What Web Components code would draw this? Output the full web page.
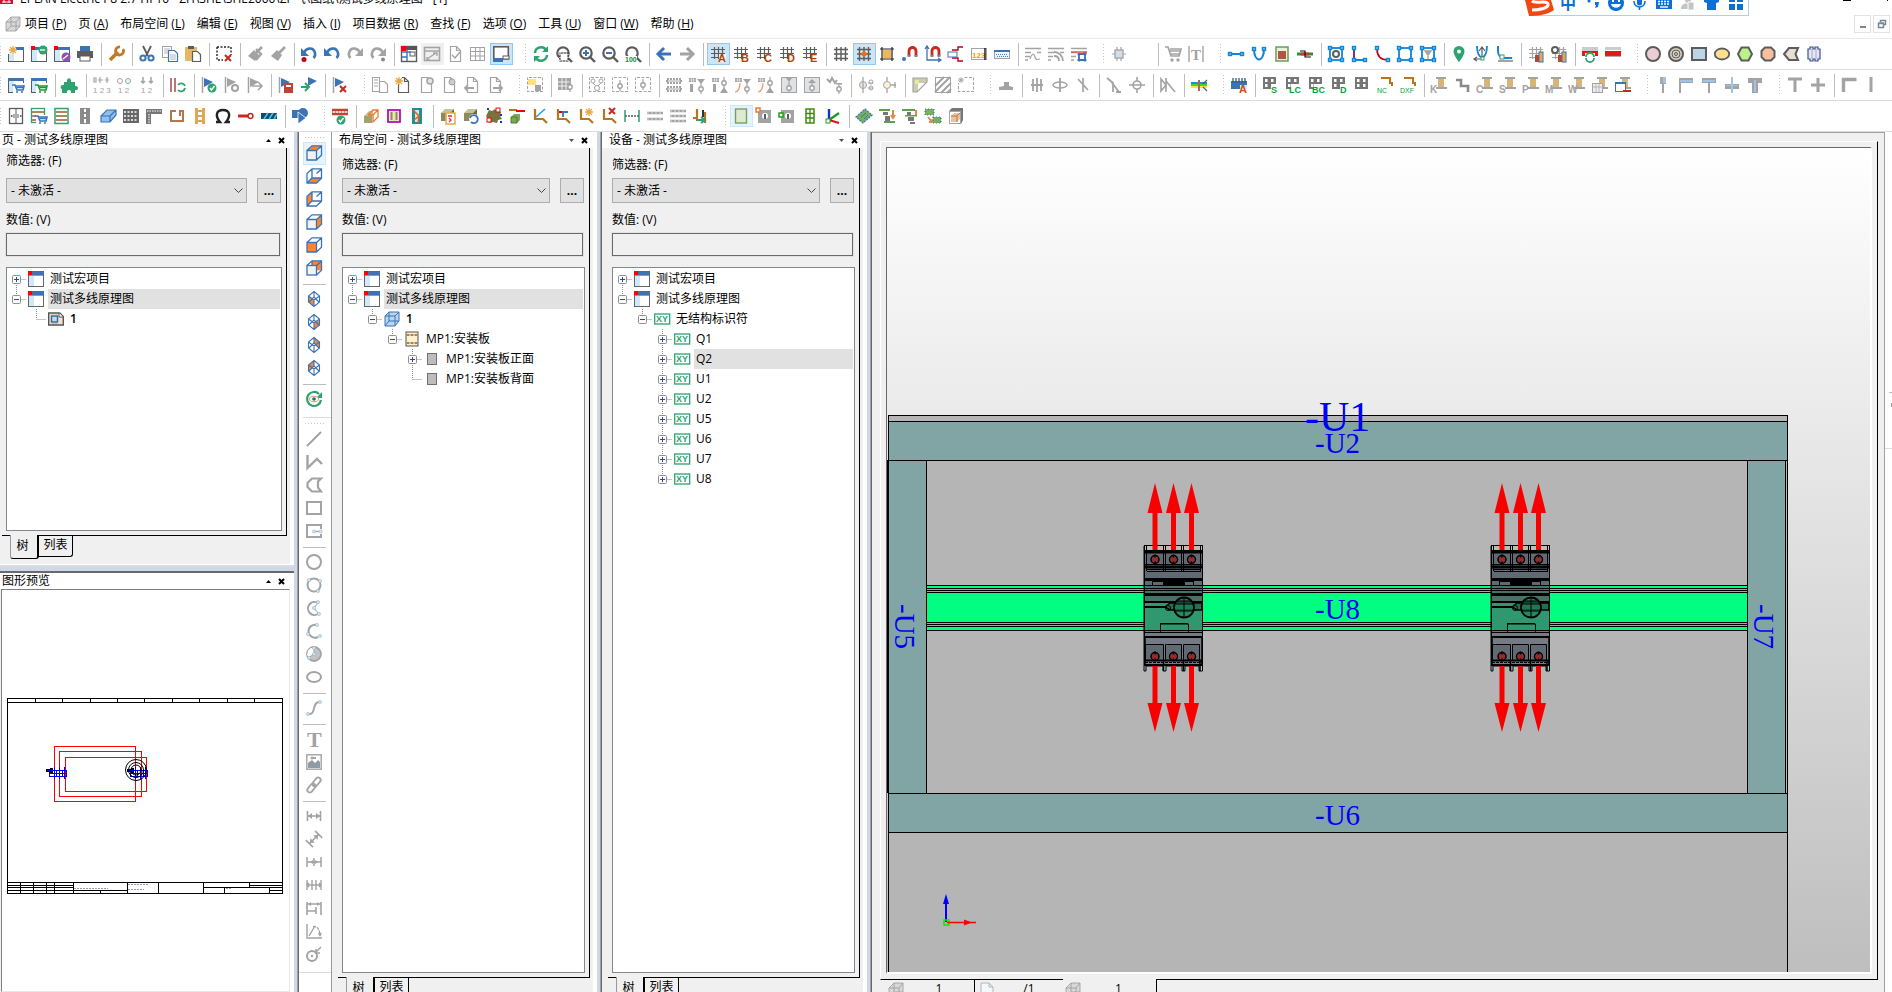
<!DOCTYPE html>
<html lang="zh-CN">
<head>
<meta charset="utf-8">
<title>EPLAN Electric P8</title>
<style>
html,body{margin:0;height:100%;overflow:hidden;background:#fff}
body{font:12px/16px "Open Sans","Noto Sans CJK SC",sans-serif;color:#000}
</style>
</head>
<body>
<app-window></app-window>
<script>
const B='#3a74b5',O='#e8a94a',N='#2ea36f',G='#a3a3a3',D='#5c5c5c',R='#c8281e',S='#0f86d6';
const p=(d,s=D,w=1,f='none',x='')=>`<path d="${d}" stroke="${s}" stroke-width="${w}" fill="${f}" ${x}/>`;
const f=(d,c=D)=>`<path d="${d}" fill="${c}"/>`;
const r=(x,y,w,h,c='none',s='none',sw=1)=>`<rect x="${x}" y="${y}" width="${w}" height="${h}" fill="${c}" stroke="${s}" stroke-width="${sw}"/>`;
const c=(x,y,q,l='none',s='none',w=1)=>`<circle cx="${x}" cy="${y}" r="${q}" fill="${l}" stroke="${s}" stroke-width="${w}"/>`;
const t=(x,y,z,l,s,b=700,ff='Liberation Sans')=>`<text x="${x}" y="${y}" font-size="${z}" fill="${l}" font-weight="${b}" font-family="${ff}">${s}</text>`;

const star=(x,y)=>p(`M${x-4} ${y}h8M${x} ${y-4}v8M${x-3} ${y-3}l6 6M${x+3} ${y-3}l-6 6`,O,1.3);
const win=r(.5,1.5,15,14,'#fff',D)+r(0,1,16,3,B)+r(1,4,5,11,'#cfe9fb');
const red=r(0,0,4,4,'#f00');
const cross=(x,y,l=R)=>p(`M${x} ${y}l6 6m0-6l-6 6`,l,2);
const check=(x,y)=>c(x,y,4.5,N)+p(`M${x-2} ${y}l1.5 2 3-4`,'#fff',1.4);
const cart=(l,y=8)=>p(`M4 ${y}h3l2 5h6l1-4h-8`,l,1.6)+p('M9 10.500h7',l,1.5)+c(9,15,1,l)+c(14,15,1,l);
const page=(l,e='')=>p('M3.5 .5h6l4 4v11h-10zM9.5 .5v4h4',l,1.2,'#fff')+e;
const hash=l=>p('M4.5 1v12M8.5 1v12M12.5 1v8M1 3.5h14M1 7.5h14M1 11.5h8',l,1.2);
const flag=(l,e='')=>p('M1.5 0v16',G,1.5)+f('M3 1l9 4-9 5z',l)+e;
const lens=(e,l=D)=>c(7,7,5.7,'none',l,2.2)+p('M11 11l5 5',l,2.4)+e;
const sq=(x,y)=>r(x-1.5,y-1.5,3,3,'#7cc4f5',S,1.4);
const rect4=(e='')=>r(2,2,12,12,'none',S,1.8)+sq(2,2)+sq(14,2)+sq(2,14)+sq(14,14)+e;
const dash=(e,l=G)=>r(.5,.5,15,14,'none',l)+p('M.5 .5h15v14h-15z','#fff',1.4,'none','stroke-dasharray="1.5 3"')+e;
const ring=(x,y,l=G)=>p(`M${x} ${y-6}v4M${x} ${y+2}v3`,l,1.2)+c(x,y,2.2,'#fff',l,1.4);
const tri=(x,y)=>f(`M${x} ${y}h8l-4 5z`,G);
const mini=r(0,1,7,4,G)+p('M2.5 1v4M4.5 1v4M0 3h7','#fff',.5);
const magnet=(x,y)=>p(`M${x} ${y+9}v-5a3.500 3.500 0 0 1 7 0v5`,R,2.800)+p(`M${x-1.5} ${y+9}h3M${x+5.5} ${y+9}h3`,'#888',2);
const box3=(l='#8d8a5c')=>f('M1 5l4-4h9l-4 4z','#c5c296')+f('M1 5h9v8h-9z',l)+f('M10 5l4-4v8l-4 4z','#6b683f');
const bend=p('M3 1v10h8l4 4','#b5761e',2.2);
const board=r(1,0,13,12,'#767676')+r(3,2,2.5,3,'#fff')+r(9,2,2.5,3,'#fff')+r(3,7,2.5,3,'#fff')+r(9,7,2.5,3,'#fff');
const grayT=r(5,0,10,2,G)+r(7,2,6,8,'#d7b477')+r(5,10,11,2,G);
const polyg=(d,l)=>p(d,D,2,l);
const hatch=r(.5,.5,15,15,'#fff',G)+p('M0 9L9 0M0 15L15 0M6 16L16 6M12 16l4-4',G,2);
const cube=(face,l='#ff8431')=>r(1,5,9,10,'#f2f2f2')+f(face,l)+p('M1 5.5h9.500v9.500h-9.500zM1 5.500L6 .8h9.500v9.500l-5 4.700M10.500 5.500l5-4.500',B,1.3);
const cubeBack=(face)=>f(face,'#ff8431')+p('M1 5.500L6 .8h9.500v9.500l-5 4.700h-9.500zM1 15l5-5h9.500M6 1v9M10.500 5.500l5-4.500',B,1.3);
const iso=face=>f(face,'#ff8431')+p('M8 .5L13.500 5v6L8 15.500 2.500 11V5zM2.500 5L8 9l5.500-4M8 9v6M8 1v5L3 11M8 6l5 5',B,1.1);
const undo=(l,dot='')=>p('M3 8c1-6 9-8 11-1c.5 2-.5 4-1.500 5',l,2.6)+f('M0 2v8h8z',l)+dot;
const redo=(l,dot='')=>p('M13 8c-1-6-9-8-11-1c-.5 2 .5 4 1.500 5',l,2.6)+f('M16 2v8h-8z',l)+dot;
const brush=p('M15 1L9 7',G,2.6)+f('M7 4l5 5-4 6-7-5z',G);
const sheet=(l,e='')=>r(.5,1.5,14,13,'#fff',l)+p('M.5 5.500h14M5.500 1.500v13M10 1.500v13M.5 10h14',l)+e;
const dim=p('M1.5 3v10M14.500 3v10M2 8h12',G,1.6)+f('M2 8l4-3v6zM14 8l-4-3v6z',G);
const refresh=l=>p('M2 7a6 6 0 0 1 11-3M14 9a6 6 0 0 1-11 3',l,2.4)+f('M15 0v6h-6zM1 16v-6h6z',l);
const grid3=l=>p('M3.500 1v14M8 1v14M12.500 1v14M1 3.500h14M1 8h14M1 12.500h14',l,1.4);
const wave=(l)=>p('M0 2.500h16M0 6.500h6M12 6.500h4M0 10.500h5M0 14h3',l,1.3);
const dot=(x,y)=>c(x,y,1.6,'#cfe6f5','#8fb6ce',.6);

const ICONS={
winNew:win+r(0,0,8,8,'#fff')+star(5,4),winRe:win+red+c(12,4,4.5,N)+p('M9 4h5','#fff',1.3),winLink:win+red+c(12,11,4.5,'#8c52b0')+p('M9 13l5-4','#fff',1.3),
print:r(3,0,10,5,B)+r(0,5,16,7,D)+r(3,10,10,5,'#fff',D),
wrench:p('M2 14L10 6',"#c07a28",3.6)+p('M15 3a4 4 0 1 1-3-2','#c07a28',2.8),
cut:p('M4 0l5 10M12 0L7 10',D,1.8)+c(4,12,2.6,'none',B,2)+c(12,12,2.6,'none',B,2),
copy:r(.5,.5,9,11,'#fff',G)+p('M6.500 4.500h6l3 3v8h-9z',B,1.2,'#fff')+p('M2 3h6M2 5h4M2 7h4M8 9h6M8 11h6M8 13h6',G,.8),
paste:r(0,1,12,14,'#e5b867')+r(3,0,6,3,D)+p('M7.500 5.500h5l3 3v7h-8z',D,1.2,'#fff'),
selDel:p('M1 1h14v8M1 1v13h6','#222',1.4,'none','stroke-dasharray="2 1.500"')+cross(9,9),
brush1:brush+p('M9 3l5 5-5 6',G,2.4),brush2:brush,
undoR:undo(B,c(3,13.500,2.500,'#c00018')),undo:undo(B),redo:redo(G),redoD:redo(G,c(13,13.500,2,'#888')),
layout:r(.5,.5,15,15,'#fff',D,1.4)+r(5,0,11,4,'#555')+r(0,0,5,5,'#f00')+p('M6 4v11M1 6h9M1 11h5',B,1.4)+r(9,6,5,4,'#fff',D),
frame:r(.5,1.500,15,13,'none',G,1.6)+p('M1 5h14M3 13L12 7M9 7h4v3M6 14h-3v-3',G,1.3),
pageCk:page(G,p('M5 9l3 3 5-6',G,1.5)),table:sheet(G),screen:r(.8,.8,14.500,12,'#fff',D,1.6)+r(0,12,10,4,B)+r(10,10,6,3,'#fff',D),
refresh:refresh(N),zoomW:lens(r(4,7,8,8,'#fff','#222'))+p('M4 7h8v8h-8z','#fff',1.200,'none','stroke-dasharray="1 2"'),
zoomIn:lens(p('M4 7h6M7 4v6',B,2)),zoomOut:lens(p('M4 7h6',B,2)),zoom100:lens(r(0,10,12,6,'#fff')+t(0,16,7,'#138a3c','100')),
left:p('M3 8h12',B,3)+p('M8 2L2 8l6 6',B,3),right:p('M1 8h12',G,3)+p('M8 2l6 6-6 6',G,3),
...Object.fromEntries([...'ABCDE'].map(k=>['hash'+k,hash(D)+r(9,8,7,8,'#ffffffb0')+t(8,16,11,'#b84300',k)])),
grid:grid3(D),gridO:grid3(D)+c(8,8,2.5,'#ff6a00'),gridB:r(4,4,8,8,'#f0b65c')+p('M3 1v14M13 1v14M1 3h14M1 13h14','#222',1.2),
mag:magnet(7,1)+c(2,13,2,B),magAx:p('M2 1v13h13M0 3l2-3 2 3M13 12l3 2-3 2',B,1.3)+magnet(7,1),
conn:p('M4 4h6v-3h5M4 12h6v3h5','#c00018',1.4)+r(0,6,9,5,'#fff',B),num:r(.5,2.500,15,11,'#fff',G)+t(1,12,8,'#e8a000','123')+p('M14 2v12','#111',1.4),
ruler:r(.5,4.500,15,8,'#eef4fb',G)+r(0,4,16,2,B)+p('M2 8.500h12M3 10.500h11',B,.9,'none','stroke-dasharray="1 1"'),
wav1:wave(G)+p('M5 13c2-6 4-6 5-2s3 2 5 2',G,1.2),wav2:wave(G)+p('M6 6c5 0 9 4 9 9M6 10c3 0 5 2 5 5',G,1.8),wav3:wave(G)+p('M0 6h16','#f44',1.4)+p('M7 8h8M7 14h8M8 7v8M14 7v8',B,1.8)+c(8,8,1.6,B)+c(14,8,1.6,B)+c(8,14,1.6,B)+c(14,14,1.6,B),
chip:r(4,4,8,8,'#cfe0ec',G,1.3)+p('M6 1v3M10 1v3M6 12v3M10 12v3M1 8h3M12 8h3',G,1.2),
cart:p('M0 1h3l3 9h8l2-7h-11M5 5h10M6 8h9',G,1.7)+c(7,14,1.7,G)+c(13,14,1.7,G),txt:p('M1 0v16M15 0v16',G,1.4)+t(3,14,15,G,'T',700,'Liberation Serif'),
line2:p('M1 8h14',S,2)+sq(2,8)+sq(14,8),uu:p('M3 3c0 14 10 14 10 0',S,2)+sq(3,3)+sq(13,3),sqR:r(2,1,12,14,'#e8f2d8','#6f9a5c',1.5)+r(4,5,8,8,'#b35544'),
wire:p('M0 8h16','#2a8f3a',3)+p('M4 8h8','#d33',3)+p('M3 5h5v6h6','#111',1.2),
r4g:rect4(c(8,8,3,'none',D,2)),ll:p('M3 2v12h11',S,2)+p('M3 1v13','#c00018',1.2)+sq(3,2)+sq(3,14)+sq(14,14),arcR:p('M3 3c0 7 4 11 11 11','#c00018',1.6)+sq(3,2)+sq(14,14),
r4:rect4(),r4t:rect4(p('M5 5h6l-3 4zM8 8v5',G,1.4,G)),
pin:f('M8 0a5.500 5.500 0 0 1 5.500 5.500c0 4-5.500 10.500-5.500 10.500s-5.500-6.500-5.500-10.500a5.500 5.500 0 0 1 5.500-5.500z',N)+c(8,5.500,2,'#fff'),
ua:p('M3 0c0 15 10 15 10 0',S,1.8)+p('M8 2v10M5 5l3-4 3 4M0 13h10M3 11l-3 2 3 2',D,1.2)+r(7,11,3,3,'#fff',N),ul:p('M1 0v5c0 5 3 7 6 7h8',S,2)+p('M1 15h15',G,2)+r(3,9,4,4,'#fff',N),
hashT:hash(G)+r(7,9,4,7,'#b43')+r(11,6,4,10,O,B),gearT:hash(G)+c(4,4,3,'#fff',D,2)+r(7,9,4,7,'#b43')+r(11,6,4,10,O,B),
barRe:r(0,1,16,4,'#ccc')+r(0,5,16,5,'#e01818')+r(3,7,10,9,'#fff')+p('M4 11a4 4 0 0 1 8 0M12 12a4 4 0 0 1-8 0',N,1.8),bar:r(0,1,16,3,'#ccc')+r(0,5,16,4,'#e01818')+r(0,9,16,1.500,D),
circ:c(8,8,7,'#e9cfd3',D,2),target:c(8,8,7,'#d9d0c2',D,2)+c(8,8,4,'none',D)+c(8,8,1.500,'none',D),rect:r(1,2,14,12,'#bdd6e6',D,2),
ell:`<ellipse cx="8" cy="8" rx="7.2" ry="5.500" fill="#ffdf8e" stroke="${D}" stroke-width="1.800"/>`,
hexG:polyg('M4.500 1.500h7l3.500 6.500-3.500 6.500h-7L1 8z','#bdf28b'),octO:polyg('M5 1.500h6l3.500 3.500v6L11 14.500H5L1.500 11V5z','#f7bf9e'),flagP:polyg('M6 2h9l-2.500 6 2.500 6H6L1 8z','#e6dfd2'),
film:p('M2 3h2V1h3v2h2V1h3v2h2v10h-2v2h-3v-2h-2v2h-3v-2h-2z','#3c4f91',1.2,'#e4e6f2')+p('M6 3v10M10 3v10','#aab',1),

wCart:win+r(5,6,11,10,'#fff')+cart(B),wCartG:win+r(5,6,11,10,'#fff')+cart('#1a9a32'),
puzzle:f('M2 5h3c-1-5 5-5 4 0h4v4c4-1 4 5 0 4v3h-4c1-4-5-4-4 0h-5v-4c-2 0-2-5 2-4z',N),
g123a:p('M1 1h2v4h-2zM7 0v6M5 3h5M14 0v6M12 3h4',G,1.2)+t(0,16,8,G,'1 2 3',400),g12a:c(4,4,2.500,'#fff',G)+c(12,4,2.500,'#dff',G)+t(2,16,8,G,'1 2',400),g12b:p('M4 0v6M2 4l2 2 2-2M12 0v6M10 4l2 2 2-2',G,1.5)+t(2,16,8,G,'1 2',400),
linesRe:r(0,1,2,14,'#b77')+r(4,1,2,14,'#b77')+p('M8 8a4 4 0 0 1 7 1M15 11a4 4 0 0 1-7 2',N,1.8),
flagCk:flag(B,check(11,11)),flagG:flag(G,c(11,11,3,'#fff',G,2)),flagGo:flag(G,p('M5 9h9M11 5l4 4-4 4',G,1.600)),
flagBk:flag(B,r(6,6,9,10,'#c0432f')+r(8,8,5,2,'#fff')),flagIn:f('M7 0l9 4-9 5z',B)+p('M0 10h7M4 6l4 4-4 4',N,2),flagX:flag(B,cross(8,9)),
pages:r(.5,.5,7,14,'#fff',G)+p('M2 3h4M2 6h4M2 9h4',G)+p('M7.500 4.500h5l3 3v8h-8z',G,1.200,'#fff'),
pageNew:page(D)+r(0,0,7,7,'#fff')+star(4,4),pageR:page(G)+c(12,4,3,'#dfe8df',G,1.500),pageL:page(G,c(11,5,3,'#ccc',G)),
pageBack:page(G)+r(0,8,7,5,'#fff')+p('M10 11H1M4 8l-3 3 3 3',G,1.8),pageFwd:page(G)+p('M6 11h9M12 8l3 3-3 3',G,1.8),
note:dash(r(1,2,8,6,'#ffdf7e')+r(8,8,6,6,G)),tabRing:r(0,1,13,12,G)+p('M4 1v12M8 1v12M0 5h13M0 9h13','#fff',.8)+ring(12,10),
dash1:dash(c(4,4,2,'#fff',G)+c(12,4,2,'#fff',G)+c(8,11,2.500,'#fff',G)+p('M4 6l3 3M12 6L9 9',G)),dash2:dash(ring(8,9)),dash3:dash(ring(8,8)),
clouds:p('M1 2h14v4H1zM1 10h14v4H1z',G,2,'none','stroke-dasharray="2 1"')+p('M0 4h16M0 12h16',G,1),
m1:mini+tri(8,2)+ring(12,12)+r(1,7,3,8,G),m2:mini+ring(12,6)+f('M8 16l4-6 4 6z',G)+r(1,7,3,8,G),m3:mini+tri(8,2)+ring(12,12)+p('M5 6c0 5-2 9-5 9','#e0986a',1.2),m4:mini+ring(12,6)+f('M8 16l4-6 4 6z',G)+p('M5 6c0 5-2 9-5 9','#e0986a',1.2),
b1:r(.5,.5,15,15,'#dfe3e6',G)+f('M5 1h6l-3 4z',G)+ring(8,11),b2:r(.5,.5,15,15,'#dfe3e6',G)+f('M4 6h8l-4-4z',G)+ring(8,11),wv:p('M0 2l3 3 2-4 3 5 2-3',G,2)+ring(12,12)+r(9,6,6,1.500,G),
sym1:c(5,8,3.500,'#f3e6de',G)+p('M5 0v16M10 6h5M10 11h5',G,1.2)+c(13,5,2,'none',G)+c(13,11,2,'none',G),sym2:c(6,8,3.500,'#f8f3d8',G)+p('M6 0v4M6 12v4M10 8h5M14 5v6',G,1.3),
corner:f('M1 1h14v5H6v9H1z','#c9cdb0')+p('M1 1v14h4L15 5V1z',G,1.2)+r(3,3,4,4,'#e8e8a0'),hatch,newBox:dash('')+r(0,0,6,6,'#fff')+p('M3 0v6M0 3h6M1 1l4 4M5 1L1 5',G,.9),
base:f('M1 13h14v-3l-4-1V5H6v4l-5 1z',G),v3:p('M4 2v12M8 1v14M12 2v12M2 8h12',G,1.8),v1:`<ellipse cx="8" cy="8" rx="7" ry="3" fill="none" stroke="${G}" stroke-width="1.5"/>`+p('M8 1v14',G,1.800),vd:p('M8 1v14M3 2l10 11',G,1.700),
ka:p('M1 1l6 5v9M4 3l9 12M10 15h5',G,1.800),kb:c(8,8,4,'#fff',G,1.600)+p('M8 0v4M8 12v4M0 8h16',G,1.600),kc:p('M1 2v12l5-6zM6 1v14M6 4l9 11',G,1.600),
rainbow:r(0,5,16,2,'#2a8ad6')+r(0,7,16,2,'#3d3')+r(0,9,16,2,'#f5e63a')+p('M8 3v11',"#a66",2)+p('M12 7l4-4M12 10l4 4',D,1.200),
comb:r(0,4,16,8,B)+p('M2 1v5M5 1v5M8 1v5M11 1v5M14 1v5','#2c5f94',1.300)+r(9,8,7,8,'#ffffffd0')+t(8,16,11,'#d64b00','A'),
...Object.fromEntries(['S','LC','BC','D'].map(k=>['bd'+k,board+r(k.length>1?6:9,7,8,9,'#fff')+t(k.length>1?4:9,16,9,'#00a63a',k)])),bd:board,
nc:p('M4 1h9v5h2v3','#b5761e',2)+t(0,16,7,'#00a63a','NC',400),dxf:p('M4 1h9v5h2v3','#b5761e',2)+t(0,16,7,'#00a63a','DXF',400),
zz:p('M2 3h5v6h7v6','#8a8a8a',2.6),...Object.fromEntries([...'KCSPMW'].map(k=>['t'+k,grayT+t(-1,16,10,G,k)])),
tTab:grayT+r(.5,6.500,10,9,'#eee',G)+p('M4 7v8M7 7v8M1 10h9',G,.7),tTabB:grayT+r(.5,5.500,10,9,'#fff',B)+r(0,5,11,2,B)+r(8,13,8,2,R),
a1:r(5,0,6,7,'#a8a8a8')+r(8,0,3,6,'#9fc4e8')+r(7,7,2,9,G),a2:r(1,1,14,5,G)+r(2,3,13,2,'#9fc4e8')+r(1,5,2,11,G),a3:r(1,1,14,5,G)+r(2,3,12,2,'#9fc4e8')+r(7,6,2,10,G),a4:r(1,7,14,5,G)+r(7,0,2,16,'#9fc4e8')+r(2,8,12,1,'#9fc4e8'),a5:r(1,1,14,5,G)+r(5,5,6,11,G)+r(7,3,2,12,'#9fc4e8'),
c1:p('M1 2h14M8 2v13',G,3),c2:p('M1 8h14M8 1v14',G,3),c3:p('M2.500 15V2.500h13',G,3.400),c4:p('M7 0v15',G,3),

cab:r(1.500,.5,13,15,'#fff',D,1.3)+p('M8 0v16M6 6v4M10 6v4',D,1)+r(3,7,1.500,2,B)+r(12,7,1.500,2,B),rackC:r(.5,.5,13,14,'#fff',N,1.300)+p('M1 4h12M1 8h12M1 12h5','#b7835a',2)+r(5,7,11,9,'#fff')+cart(B),
rack:r(1,.5,13,15,'#fff',N,1.500)+p('M2 4h11M2 8h11M2 12h11','#b7835a',2.200),rail:r(3,0,10,16,'#8a8a8a')+r(7,1,2,3,'#fff')+r(7,6,2,3,'#fff')+r(7,11,2,4,'#fff'),
duct:f('M1 8l6-6h9v5l-6 7H1z','#8fc1ea')+p('M1 8l6-6h9v5l-6 7H1zM1 8h9v6M10 8l6-6',B,1.200),perf:r(0,1,16,14,'#666')+p('M1 4h14M1 8h14M1 12h14','#fff',1.500,'none','stroke-dasharray="2 1.500"'),
ang:f('M0 1h16v5H5v10H0z','#777')+p('M1 3h14M3 6v9','#fff',1,'none','stroke-dasharray="1.500 1"'),cprof:p('M7 3H2v10h12V3h-3v5','#b5764a',2),ladder:p('M4.500 0v16M11.500 0v16',"#e0a84e",3)+p('M6 3h4M6 8h4M6 13h4',"#c98f35",1.500),
omega:p('M1 14h4c-5-6-4-12 3-12s8 6 3 12h4','#222',2.4),key:p('M0 8h10',R,3)+c(12.500,8,2.400,'#fff',R,1.500),belt:r(0,5,16,6,'#124b66')+p('M3 11l4-6M8 11l4-6M13 11l3-5','#4ac2e8',1.600),
shapes:f('M0 2h8v8H0z',B)+c(11,5,5,B)+f('M6 4l8 6-8 6z',B)+p('M6 4l8 6-8 6z','#fff',.8),
chkR:p('M0 2h16M0 6h16','#c0432f',2.400)+p('M0 4h16','#c0432f',1,'none','stroke-dasharray="1 2"')+check(9,12),
cubeO:f('M1 8h8v7H1z','#a4a070')+f('M1 8l5-5h4v5z','#c5c296')+p('M5 7l5-5h5v7l-5 5V7l5-5M5 7h5','#f0762a',1.300),plate:r(2,2,12,12,'#e8e6b8','#b010c0',1.800)+p('M5.500 4v8M10.500 4v8','#8d8a5c',2),
teal:r(3,0,10,16,'#1f8f93')+r(6,2,4,12,'#d5e8e8')+p('M4 2l6 6-5 4M10 8l-1 7','#e0641e',1.600),boxP:box3()+r(6,5,9,11,'#fff',O,1.500)+p('M8 8h4M9 10l2 2-2 2','#c33',1.300),boxR:box3()+c(11,11,5,'#fff')+p('M7 10a4 4 0 1 1 1 4',B,1.800),
burst:f('M3 2l3 1 3-2 2 3 4 0-1 4 2 3-4 1-1 3-4-1-4 1-1-4-2-3z','#77733f')+r(10,0,4,4,'#fff','#e00')+r(1,10,4,4,'#fff','#e00')+p('M1 1h2M14 14h2M14 7h2','#1034d0',2),
boxG:p('M0 2h8',"#b5761e",2)+p('M7 3h9','#e00',2)+f('M2 9l3-3h6l-3 3zM2 9h6v6H2zM8 9l3-3v6l-3 3z','#7da858')+p('M2 9h6v6H2z','#4b7a2c'),
be1:bend+p('M4 9l9-8',"#1aa0e8",1.500),be2:bend+p('M4 4h9M8 4v5',B,1.800)+p('M4 4h3','#e00',2),be3:bend+star(11,4),be4:bend+cross(8,0),
width:p('M1 2v12M15 2v12',N,1.500)+p('M1 8h14',D,1.500,'none','stroke-dasharray="2 1"'),eq1:p('M0 5h16M0 11h16',G,2.600)+p('M0 5h16M0 11h16','#ddd',1,'none','stroke-dasharray="2 2"'),eq2:p('M0 3h16M0 8h16M0 13h16',G,2.600)+p('M0 3h16M0 8h16M0 13h16','#ddd',1,'none','stroke-dasharray="2 2"'),
bendG:p('M4 1v9h-4M12 4v11',"#b5761e",2.200)+p('M3 12h8M8 9l4 3-4 3',N,2)+r(9,2,2,7,'#333'),
pane:r(2.500,1,11,14,'#dfe9cf','#7ba05c',1.400),paneO:r(2,2,13,13,G)+c(9,8,3,'#fff')+r(8,6,2,5,D)+r(0,0,4,4,'#fff','#f0762a',1.500),paneG:r(2,2,13,13,G)+c(9,8,3,'#fff')+r(8,6,2,5,D)+r(0,5,4,4,'#fff','#18a018',1.500),
green6:r(4,1,8,14,'#fff','#3c8a14',1.500)+p('M8 1v14M4 5.500h8M4 10h8','#3c8a14',1.300),axes:p('M4 1v11',"#1034d0",2.400)+p('M4 12l10-7','#18a018',2.400)+p('M4 12l10 3','#d01818',2.200)+r(1,11,4,4,'#fff','#18a018'),
diam:f('M0 9l9-8 7 6-9 8z','#78b05c')+p('M0 9l9-8 7 6-9 8z',B,1.300,'none','stroke-dasharray="2 1"')+p('M5 9l5-4M8 11l4-4',B,1),
st1:r(0,1,11,2,'#5fa050')+r(4,4,5,3,'#777')+r(6,8,5,5,'#777')+r(5,13,11,2,'#5fa050')+p('M14 2v7M12 7l2 3 2-3',"#e08a4a",2),st2:r(0,1,13,2,'#5fa050')+r(5,4,4,3,'#777')+r(6,9,6,4,'#777')+r(3,7,12,1.500,'#5fa050')+p('M14 2v5',"#e08a4a",2.200)+r(8,14,5,2,'#777'),
st3:r(0,1,9,6,'#78b05c')+r(8,9,8,6,'#78b05c')+p('M0 1h9v6H0zM8 9h8v6H8z',B,1.200,'none','stroke-dasharray="1 2"')+p('M3 9l4 5M7 11v3h-3',"#e08a4a",1.800),
boxF:f('M1 3l3-3h11v12l-2 4z','#777')+r(1.500,3.500,11,12,'#fff',G)+f('M3 8l3-3h6v6l-3 3H3z','#e9c3a0')+p('M3 8h6v6M9 8l3-3','#b5764a'),

k1:cube('M1 5.500L6 .8h9.500l-5 4.700z'),k2:cubeBack('M1 15l5-5h9.500l-5 5z'),k3:cubeBack('M1 5.500L6 .8v9.200l-5 5z'),k4:cube('M10.500 5.500l5-4.700v9.500l-5 4.700z'),k5:cube('M1 5.500h9.500v9.500H1z'),k6:f('M6 .8h9.500v9.500H6z','#ff8431')+r(1,5.500,9.500,9.500,'#f2f2f2',B,1.3)+p('M1 5.500L6 .8h9.500v9.500l-5 4.700M10.500 5.500l5-4.500M6 1v5',B,1.3),
i1:iso('M2.500 5.500L8 9.500v6L2.500 11z'),i2:iso('M13.500 5.500L8 9.500v6l5.500-4.500z'),i3:iso('M8 .5L13.500 5v6L8 6z'),i4:iso('M8 .5L2.500 5v6L8 6z'),
eye:p('M13 3a7 7 0 1 0 2 6',N,2.200)+f('M16 1v6h-6z',N)+`<ellipse cx="8" cy="8" rx="4.500" ry="2.700" fill="#fff" stroke="#d9a066"/>`+c(8,8,1.800,'#2c5f94'),
s1:p('M1 15L15 1',G,2),s2:p('M1.500 1v13L11 5l5 5',G,2.400),s3:p('M6 1.500h9l-3 3v6l3 4H6L1.500 10V6z',G,2.200),s4:r(1,2,14,12,'none',G,2),s5:r(1,2,14,12,'none',G,2)+r(11,6,5,5,'#fff')+p('M8 8.500h8',G,1.300)+dot(8,8.500)+dot(14.500,8.500),
o1:c(8,8,7,'none',G,2),o2:c(8,8,6.500,'none',G,2)+dot(3,3)+dot(14,4)+dot(12,14),o3:p('M12 3a6.500 6.500 0 1 0 0 11',G,2)+p('M12 3L8 8l5 6',G)+dot(12,2)+dot(8,8)+dot(13,14),o4:p('M11 2a6.500 6.500 0 1 0 1 12',G,2)+dot(11,2)+dot(14,13)+dot(2,11),
o5:c(8,8,7,'#c4c4c4',G,1.800)+p('M8 8V1A7 7 0 0 0 2 12z',G,1,'#fff')+dot(8,2)+dot(8,8)+dot(3,12),o6:`<ellipse cx="8" cy="8" rx="7" ry="5" fill="none" stroke="${G}" stroke-width="2"/>`,
sp:p('M2 14h2c6 0 2-12 9-12',G,2)+dot(2,14)+dot(14,2),tx:t(1,16,22,G,'T',700,'Liberation Serif'),im:r(.8,.8,14.400,14.400,'#fff',G,1.400)+f('M2 14V9l4-3 3 3 3-3 2 2v6z','#909aa2')+c(6,4,1.500,G)+r(5,3,5,2,G),
lk:`<g transform="rotate(-50 8 8)"><rect x="-1" y="5.500" width="10" height="5" rx="2.500" fill="none" stroke="${G}" stroke-width="1.800"/><rect x="7" y="5.500" width="10" height="5" rx="2.500" fill="none" stroke="${G}" stroke-width="1.800"/></g>`,
d1:dim,d2:`<g transform="rotate(-45 8 8)">${dim}</g>`,d3:p('M1 3v10M15 3v10M8 4v8M1 8h14',G,1.500)+f('M4 8l3-2v4zM12 8L9 6v4z',G),d4:p('M1 3v10M6 3v10M10 3v10M15 3v10M1 8h14M3 6l-2 2 2 2M13 6l2 2-2 2',G,1.400),d5:p('M1 2v13M15 2v13M1 4h14M1 11h9M10 7v7',G,1.600)+f('M2 4l3-2v4zM14 4l-3-2v4z',G),
d6:p('M1 1v14h15M3 13L9 3',G,1.400)+p('M7 4c4-2 7 3 7 9',G,1.400,'none','stroke-dasharray="3 1"')+f('M12 10l2 4 2-4z',G),d7:c(6,10,5,'none',G,2)+c(6,10,1.200,G)+p('M9 7l6-6M10 3v4h4',G,1.500),

project:r(.5,.5,15,15,'#fff','#666',1)+r(0,1,16,3,B)+r(1,5,5,10,'#cfe9fb')+r(1,4,14,1,'#999')+r(0,0,4,4,'#f00'),
pageI:p('M.7 2h11l3.600 3.500V14H.7z','#555',1.400,'#f3dfd3')+p('M11 2v4h4','#555',1,'#fff')+r(3.500,5,6,6,'#b9dcf0','#246fa0',1.400)+p('M5 3.500v1M8 3.500v1M5 12v1M8 12v1','#f0762a',1),
space:f('M1 5l4-4h10v9l-4 5H1z','#b9d6ee')+p('M1 5h10v10H1zM1 5l4-4h10v9l-4 5M11 5l4-4M5 1v9h10M5 10l-4 5',B,1),
mp:r(2,1,12,14,'#fdf0cf','#555',1)+p('M2.500 4h11M2.500 12h11','#b08050',2,'none','stroke-dasharray="3 1"'),plateS:r(3.500,2.500,9,11,'#bdbdbd','#707070'),
xy:r(.7,3,15,10,'#fff',N,1.300)+t(2,11,9,N,'XY'),
cubeG:f('M1 6l5-5h9v9l-4 5H1z','#d8d8d8')+p('M1 6h10v9H1zM1 6l5-5h9v9l-4 5M11 6l4-5M6 1v9h9M6 10l-5 5','#999',.8),doc:p('M2 1h8l4 4v11H2zM10 1v4h4','#b0b6bc',1,'#f4f7fb')
};
const svg=(n,w=16)=>`<svg width="${w}" height="${w}" viewBox="0 0 16 16" aria-hidden="true" overflow="visible">${ICONS[n]||''}</svg>`;
const define=(name,build)=>customElements.define(name,class extends HTMLElement{
  connectedCallback(){ if(!this.shadowRoot) this.attachShadow({mode:'open'}).innerHTML=build(this); }
});

/* Icon strip. "|" separator, ":" group grip, "_" blank; suffix * active, ^ light, ~ shaded */
define('tool-strip',el=>{
  const cls={'*':'on','^':'hot','~':'dim'};
  const items=el.getAttribute('items').trim().split(/\s+/).map(k=>{
    if(k==='|')return '<i class="sep"></i>';
    if(k===':')return '<i class="grip"></i>';
    if(k==='_')return '<i class="gap"></i>';
    const m=cls[k.slice(-1)],n=m?k.slice(0,-1):k;
    return `<button type="button" class="${m||''}" aria-label="${n}">${svg(n)}</button>`;
  }).join('');
  return `<style>
  :host{display:flex;align-items:center;box-sizing:border-box}
  button{flex:none;box-sizing:border-box;width:23px;height:22px;padding:2px 3px 2px 2px;border:1px solid transparent;background:none;display:block;line-height:0}
  .on{background:#cce4f7;border-color:#90c8f6}.hot{background:#e5f3ff;border-color:#cce8ff}.dim{background:#f0f0f0}
  i{flex:none;box-sizing:border-box}
  .sep{width:8px;height:23px;background:linear-gradient(#bdbdbd,#bdbdbd) 4px 0/1px 100% no-repeat}
  .grip{width:17px;height:20px;background:repeating-linear-gradient(#c4c4c4 0 1px,#fff 1px 3px) 12px 0/1px 100% no-repeat}
  .gap{width:23px}
  :host([vertical]){flex-direction:column;align-items:flex-start}
  :host([vertical]) button{height:23px;padding-bottom:3px}
  :host([vertical]) .sep{width:23px;height:8px;background:linear-gradient(#bdbdbd,#bdbdbd) 0 4px/100% 1px no-repeat}
  :host([vertical]) .grip{align-self:stretch;width:auto;height:17px;background:linear-gradient(#dcdcdc,#dcdcdc) 0 6px/100% 1px no-repeat,repeating-linear-gradient(90deg,#c4c4c4 0 1px,#fff 1px 3px) 2px 12px/21px 1px no-repeat}
  </style>${items}`;});

define('menu-bar',()=>{
  const m=[['项目','P'],['页','A'],['布局空间','L'],['编辑','E'],['视图','V'],['插入','I'],['项目数据','R'],['查找','F'],['选项','O'],['工具','U'],['窗口','W'],['帮助','H']];
  return `<style>
  :host{display:flex;align-items:center;height:29px;border-bottom:1px solid #ebebeb;padding-left:5px;box-sizing:content-box}
  nav{display:flex;gap:12px;margin-left:4px;flex:1}
  button{font:inherit;border:0;background:none;padding:0;color:#000;white-space:pre}
  .mdi{display:flex;gap:2px;margin-right:2px}
  .mdi button{width:17px;height:18px;border:1px solid #e3e3e3;display:grid;place-items:center}
  </style>${svg('cubeG')}<nav>${m.map(([a,b])=>`<button type="button">${a} (<u>${b}</u>)</button>`).join('')}</nav>
  <div class="mdi"><button type="button" aria-label="最小化"><svg width="10" height="10"><path d="M2 8h6" stroke="#7a8894" stroke-width="2"/></svg></button>
  <button type="button" aria-label="还原"><svg width="10" height="10"><path d="M3.500 3V1.500h5v4H7M1.500 4.500h5v4h-5zM1 4h6" stroke="#7a8894" stroke-width="1.500" fill="none"/></svg></button></div>`;});

define('title-strip',()=>`<style>
  :host{display:flex;align-items:flex-end;height:9px;overflow:hidden}
  .t{line-height:20px;white-space:pre;margin-left:7px}
  svg.logo{align-self:flex-start;flex:none}
  .win{margin-left:auto;align-self:flex-start;display:flex;gap:36px;margin-right:4px}
  .win b{width:8px;height:1px;background:#000}.win b+b{width:1px}
  </style><svg class="logo" width="13" height="5"><path d="M0 0h13v4H0z" fill="#e1062c"/><path d="M2 2h9M4 0v3M9 0v3" stroke="#fff"/></svg>
  <span class="t">EPLAN Electric P8 2.7 HF10 - ZH\\SHE\\SHE2000\\ZP气\\图纸\\测试多线原理图 - [1]</span><span class="win"><b></b><b></b></span>`);

define('ime-bar',()=>`<style>
  :host{position:absolute;top:0;right:143px;width:212px;height:15px;border:solid #b5cdea;border-width:0 1px 1px 0;background:#fff;overflow:visible;display:block}
  svg{display:block;margin-left:-12px}
  </style><svg width="226" height="17"><path d="M1 0h26l3 10c-6 4-14 6-25 6z" fill="#f2480f"/><path d="M8 1c3 3 15-1 16 3s-8 6-16 6" stroke="#fff" stroke-width="3" fill="none"/>
  <g fill="#0a6fd6" stroke="none"><text x="36" y="9" font-size="16" font-weight="700" font-family="Noto Sans CJK SC">中</text>
  <circle cx="65" cy="1" r="1.5"/><path d="M71 2h4l-1 5-3 1 1-3h-1z"/><circle cx="92" cy="3" r="8"/><path d="M87 4h10c-1 5-9 5-10 0z" fill="#fff"/><path d="M88 0h2v2h-2zM94 0h2v2h-2z" fill="#fff"/>
  <path d="M113 0h5v3a2.500 2.500 0 0 1-5 0z"/><path d="M110 1c0 8 11 8 11 0M115.500 7v3" stroke="#0a6fd6" stroke-width="1.600" fill="none"/>
  <path d="M132 0h16v9h-16z"/><path d="M134 1.500h12M134 4h12" stroke="#fff" stroke-width="1.400" stroke-dasharray="2 1"/><path d="M136 7h8" stroke="#fff" stroke-width="1.400"/>
  <g fill="#c4c4c4"><circle cx="164" cy="0" r="3"/><path d="M157 9c0-6 6-6 9-5v5z"/><path d="M164 2h6v8h-6z" stroke="#fff"/></g>
  <path d="M180 0h15v2l-3 1v7h-9V3l-3-1z"/><path d="M205 0h6v2h-6zM205 4h6v6h-6zM213 0h6v2h-6zM213 4h6v6h-6z"/></g></svg>`);

define('tree-item',el=>{
  const s=el.getAttribute('state');
  const up=!el.hasAttribute('first'),dn=el.hasAttribute('more');
  let g=`<path d="M10.500 10.500h10" stroke="#8a8a8a" stroke-dasharray="1 1"/>`;
  if(up)g+=`<path d="M10.500 0v10" stroke="#8a8a8a" stroke-dasharray="1 1"/>`;
  if(dn)g+=`<path d="M10.500 10v10" stroke="#8a8a8a" stroke-dasharray="1 1"/>`;
  if(s)g+=`<rect x="6.500" y="6.500" width="8" height="8" rx="1" fill="#fafafa" stroke="#8f8f8f"/><path d="M8 10.500h5${s==='+'?'M10.500 8v5':''}" stroke="#2c4a9a"/>`;
  return `<style>:host{display:flex;height:20px;line-height:20px;padding-left:calc(var(--lv,0)*20px)}
  .i{width:16px;margin:2px 4px 0 1px;flex:none;line-height:0}
  .l{flex:1;padding-left:2px;margin-right:1px;white-space:nowrap}
  :host([selected]) .l{background:#e1e1e1}:host([bold]) .l{font-weight:600}
  .g{flex:none;margin-left:-1px}</style><svg class="g" width="21" height="20">${g}</svg><span class="i">${svg(el.getAttribute('icon'))}</span><span class="l"><slot></slot></span>`;});

define('dock-panel',el=>{
  const up=el.getAttribute('arrow')==='up';
  return `<style>
  :host{display:flex;flex-direction:column;min-height:0;background:#f0f0f0;border-right:4px solid #fff}
  header{display:flex;align-items:center;height:16px;background:#fff;padding-left:2px;flex:none}
  :host([inset]) header{padding-left:7px}
  header span{flex:1;white-space:nowrap}
  header button{border:0;background:none;padding:0;width:9px;height:9px;line-height:0;margin-right:4px}
  ::slotted(*){flex:1;min-height:0}
  </style><header><span>${el.getAttribute('heading')}</span>
  <button type="button" aria-label="菜单"><svg width="9" height="9"><path d="${up?'M2 6h5L4.500 3z':'M2 3h5L4.500 6z'}" fill="${up?'#000':'#555'}"/></svg></button>
  <button type="button" aria-label="关闭"><svg width="9" height="9"><path d="M2 2l5 5M7 2L2 7" stroke="#000" stroke-width="2"/></svg></button></header><slot></slot>`;});

define('navigator-view',()=>`<style>
  :host{display:flex;flex-direction:column;box-sizing:border-box}
  .body{flex:1;min-height:0;display:flex;flex-direction:column;margin:0 3px 0 2px;padding:0 4px 4px;border:solid #000;border-width:0 1px 1px 0}
  :host([inset]) .body{margin-left:6px}
  label{display:flex;align-items:flex-end;height:30px;box-sizing:border-box;padding-bottom:var(--label-gap,5px);flex:none}
  .row{display:flex;gap:10px;height:25px;flex:none;padding-right:1px}
  .pick{position:relative;flex:1;display:flex}
  select{appearance:none;flex:1;font:inherit;border:1px solid #adadad;background:#e1e1e1;padding:0 4px;color:#000;border-radius:0;opacity:1}
  .pick svg{position:absolute;right:4px;top:9px;pointer-events:none}
  .row button{width:24px;font:inherit;font-weight:700;border:1px solid #adadad;background:#e1e1e1;padding:0}
  input{height:23px;box-sizing:border-box;width:calc(100% - 2px);background:#f0f0f0;border:1px solid #696969;outline:1px solid #e3e3e3;border-radius:0;flex:none}
  .lb{padding-bottom:5px}
  .tree{flex:1;min-height:0;margin-top:11px;background:#fff;border:1px solid #828790;padding-top:1px;overflow:hidden}
  .tabs{display:flex;align-items:flex-start;height:var(--tabs,15px);padding-left:10px;overflow:hidden;flex:none;margin-top:-1px}
  :host([inset]) .tabs{padding-left:14px}
  .tabs button{font:inherit;box-sizing:border-box;background:#f0f0f0;border:solid #000;border-width:0 1px 1px 0;width:34px;height:21px;margin-top:1px;padding:0 0 3px;border-radius:0 0 3px 0;flex:none}
  .tabs .on{width:29px;height:24px;margin-top:0;padding:0 3px 2px 0;border-width:0 2px 1px 1px;border-left-color:#999;border-radius:0 0 3px 3px}
  </style><div class="body"><label for="f">筛选器: (F)</label><div class="row"><span class="pick"><select id="f"><option>- 未激活 -</option></select>
  <svg width="9" height="7"><path d="M.5 1.500l4 4 4-4" fill="none" stroke="#444"/></svg></span><button type="button" aria-label="筛选">...</button></div>
  <label class="lb" for="v">数值: (V)</label><input id="v"><div class="tree" role="tree"><slot></slot></div></div>
  <div class="tabs" role="tablist"><button class="on" role="tab">树</button><button role="tab">列表</button></div>`);

define('page-preview',()=>{
  const blob=x=>`<path d="M${x} 769h4v-1h2v4h-3v-1h-3z" fill="#0000f0"/><path d="M${x+3} 770.500h18M${x+3} 773.500h18M${x+3} 776.500h18M${x+3.5} 770v6M${x+8.500} 767v12M${x+13.500} 767v12M${x+18.500} 767v12M${x+10.500} 770v6M${x+16.500} 770v6M${x+20.500} 770v6" stroke="#0000f0"/>`;
  return `<style>:host{display:block;background:#fff;border:1px solid #808080;border-color:#808080 #e8e8e8 #e8e8e8 #808080;margin-left:1px;overflow:hidden}svg{display:block}</style>
  <svg width="100%" height="100%" shape-rendering="crispEdges"><g transform="translate(-2 -590)" fill="none" stroke="#000">
  <path d="M7.500 698.500h275v194.500H7.500zM7.500 702.500h275M35.500 698v4M62.500 698v4M90.500 698v4M117.500 698v4M144.500 698v4M172.500 698v4M199.500 698v4M227.500 698v4M254.500 698v4"/>
  <path d="M7 882.500h275M7 885.500h66M7 887.500h66M7 890.500h120M20.500 882v11M33.500 882v11M46.500 882v11M54.500 882v11M73.500 882v11M127.500 882v11M158.500 882v11M203.500 882v11M203 887.500h79M224.500 887v6M249.500 882v5M249 885.500h33M269.500 887v6M269 890.500h13M100.500 890v3"/>
  <path d="M74 888.500h34M128 884.500h20M128 889.500h16M226 888.500h6" stroke="#99a" stroke-dasharray="2 1"/>
  <g stroke="#f00"><path d="M54.500 746.500h81v55h-81zM59.500 751.500h82v45h-82zM65.500 757.500h81v34h-81z"/></g>
  ${blob(46)}${blob(127)}
  <g shape-rendering="auto"><circle cx="136" cy="770" r="10.500"/><circle cx="136" cy="770" r="7.500"/><circle cx="136" cy="770" r="5"/></g></g></svg>`;});

define('model-canvas',()=>{
  const up=x=>`<path d="M${x-2.500} 550v-37h-5l7.500-30 7.500 30h-5v37z" fill="#f60000"/>`;
  const dn=x=>`<path d="M${x-2.500} 666v37h-5l7.500 29 7.500-29h-5v-37z" fill="#f60000"/>`;
  const term=(x,y)=>`<circle cx="${x}" cy="${y}" r="4" fill="#444c52" stroke="#000" stroke-width="1.500"/><circle cx="${x}" cy="${y}" r="2.500" fill="none" stroke="#d81010" stroke-width="1"/><circle cx="${x}" cy="${y}" r="1" fill="#f00"/><path d="M${x} ${y-5}v3M${x} ${y+2}v3" stroke="#000" stroke-width="1.500"/>`;
  const xs=[1155,1173.5,1191.5];
  const breaker=`<g stroke="#000"><rect x="1144.500" y="545.500" width="58" height="6" fill="#b9bdb4"/><path d="M1144 546v125h2v-5h17v5h3v-5h16v5h3v-5h14v5h3.500v-125" fill="none"/>
  <rect x="1144.500" y="550.500" width="58" height="35" fill="#616a73"/><rect x="1144.500" y="585.500" width="58" height="16" fill="#4a7167"/><rect x="1144.500" y="601.500" width="58" height="31" fill="#2f986f"/><rect x="1144.500" y="632.500" width="58" height="33" fill="#757b84"/>
  <path d="M1145 552h57M1145 567h57" stroke-width="3"/><path d="M1145 564.500h57M1147 569.500h54M1147 571.500h54M1144.500 555v25M1202.500 555v25"/>
  <path d="M1163.500 545v26M1165.500 545v26M1181.500 545v26M1183.500 545v26M1146.500 545v26M1200.500 545v26"/>
  <path d="M1145 579.500h57" stroke-width="3"/><rect x="1152.500" y="581.500" width="41" height="4" fill="#616a73"/><path d="M1163 583h22" stroke-width="4"/><path d="M1145 594.500h57" stroke-width="3"/><path d="M1145 588.500h57M1145 590.500h57"/>
  <path d="M1145 602h57M1145 607h30" stroke-width="2"/><path d="M1165 607l5-4h32v7h-32z" fill="#256e52" stroke-width="1.500"/><circle cx="1184" cy="607.500" r="10" fill="#1f7f58" fill-opacity=".6" stroke-width="1.800"/><path d="M1174 604h20M1174 611h20M1184 597v21M1177 601h14"/><circle cx="1168" cy="608" r="2.500" fill="none"/>
  <path d="M1160.500 632v-8h28v8M1160 623.500h28M1145 630.500h57M1145 632.500h57" fill="none"/><path d="M1145 637h57" stroke-width="2"/>
  <path d="M1145.500 660V644.500h18v16M1165.500 660v-15.500h16v16M1183.500 660v-15.500h16v16" fill="#616a73"/><path d="M1145 660.500h57M1145 665h57" stroke-width="2"/><path d="M1145 662.500h57" stroke-dasharray="3 1"/><path d="M1145 638v28M1202 638v28M1163.500 660v11M1183.500 660v11M1200 660v11" stroke-width="1.500"/></g>
  ${xs.map(x=>term(x,559.5)+term(x,656.5)+up(x)+dn(x)).join('')}`;
  const T='font-family="Liberation Serif,serif" fill="#0000f5"';
  return `<style>:host{display:block;background:linear-gradient(#fff,#bebebe);overflow:hidden;flex:1;min-height:0}svg{display:block}</style>
  <svg width="100%" height="100%"><g transform="translate(-887 -148)"><g stroke="#000" shape-rendering="crispEdges">
  <rect x="888.500" y="415.500" width="899" height="900" fill="#b5b5b5"/><rect x="888.500" y="421.500" width="899" height="39" fill="#80a5a4"/>
  <rect x="888.500" y="460.500" width="38" height="333" fill="#80a5a4"/><path d="M887.500 460v333"/><rect x="1747.500" y="460.500" width="38" height="333" fill="#80a5a4"/>
  <rect x="888.500" y="793.500" width="899" height="39" fill="#80a5a4"/>
  <rect x="926.500" y="585.500" width="821" height="45" fill="#00ff80"/><path d="M926 588.500h821M926 590.500h821M926 592.500h821M926 622.500h821M926 624.500h821M926 626.500h821"/></g>
  ${breaker}<g transform="translate(347 0)">${breaker}</g>
  <g ${T}><text x="1305" y="431" font-size="42">-U1</text><g font-size="29"><text x="1315" y="453">-U2</text><text x="1315" y="619">-U8</text><text x="1315" y="825">-U6</text>
  <text transform="translate(895 604) rotate(90)">-U5</text><text transform="translate(1754 604) rotate(90)">-U7</text></g></g>
  <path d="M946 922V903" stroke="#0000f5" stroke-width="2"/><path d="M943 904l3-10 3 10z" fill="#0000f5"/><rect x="944" y="920" width="5" height="5" fill="none" stroke="#00f000" stroke-width="1.500"/><path d="M947 922.500h29" stroke="#f00" stroke-width="1.500"/><path d="M964 919.500l8 3-8 3z" fill="#f00"/></g></svg>`;});

define('drawing-area',()=>`<style>
  :host{display:flex;flex-direction:column;min-width:0;background:#f0f0f0;box-sizing:border-box;padding:8px 6px 0 8px;border-top:1px solid #a0a0a0}
  .frame{flex:1;min-height:0;display:flex;flex-direction:column;border:solid;border-width:1px;border-color:#fff #000 #000 #fff;padding:5px}
  .well{flex:1;min-height:0;display:flex;flex-direction:column;border:solid;border-width:1px 2px 2px 1px;border-color:#696969 #fff #fff #696969}
  .tabs{display:flex;height:13px;margin-top:-1px;overflow:hidden;flex:none}
  button{font:inherit;display:flex;align-items:flex-start;box-sizing:border-box;height:24px;padding:2px 0 0 8px;margin-top:1px;border:0 solid #000;border-right-width:1px;background:#f0f0f0;width:95px;flex:none;line-height:14px}
  button:nth-child(2){width:88px;padding-left:4px;border-right:0}
  button.on{width:94px;margin-top:0;padding:3px 0 0 2px}
  button span{flex:1;text-align:center}
  </style><div class="frame"><div class="well"><model-canvas></model-canvas></div></div>
  <div class="tabs" role="tablist"><button role="tab">${svg('cubeG')}<span>1</span></button><button role="tab">${svg('doc')}<span>/1</span></button><button class="on" role="tab">${svg('cubeG')}<span>1</span></button></div>`);

define('app-window',()=>`<style>
  :host{display:flex;flex-direction:column;height:100vh;position:relative;overflow:hidden;background:#fff}
  title-strip,menu-bar,tool-strip{flex:none}
  .bar{height:31px;border-bottom:1px solid #dcdcdc;padding-left:5px;background:repeating-linear-gradient(#c4c4c4 0 1px,#fff 1px 3px) 0 7px/1px 18px no-repeat}
  main{flex:1;min-height:0;display:grid;grid-template-columns:294px 5px 33px 265px 5px 265px 5px minmax(0,1fr) 8px}
  .split{background:linear-gradient(90deg,#cfd7ea 3px,#a0a0a0 3px 4px,#696969 4px)}
  .left{display:flex;flex-direction:column;min-height:0}
  .left dock-panel{flex:1}
  .left .pages{flex:0 0 432px}
  .hs{flex:none;height:9px;box-sizing:border-box;border-top:1px solid #fff;background:linear-gradient(#dcdcdc 2px,#cfd7ea 2px 6px,#696969 6px)}
  .pages navigator-view{--tabs:29px;--label-gap:9px}
  .side{border-right:1px solid #9a9a9a;padding:10px 0 0 4px;min-height:0;overflow:hidden;background:linear-gradient(#dcdcdc,#dcdcdc) 0 840px/100% 1px no-repeat,repeating-linear-gradient(90deg,#c4c4c4 0 1px,#fff 1px 3px) 6px 5px/21px 1px no-repeat}
  dock-panel,drawing-area{min-width:0}
  .edge{border-left:1px solid #a0a0a0;background:linear-gradient(#bbb,#bbb) 4px 260px/4px 1px no-repeat,linear-gradient(#999,#999) 6px 271px/2px 4px no-repeat,linear-gradient(#ddd,#ddd) 0 316px/100% 1px no-repeat}
  </style>
  <title-strip></title-strip><menu-bar></menu-bar>
  <tool-strip class="bar" items="winNew winRe winLink print | wrench | cut copy paste | selDel | brush1 brush2 | undoR undo redo redoD | layout frame~ pageCk table screen* : refresh zoomW zoomIn zoomOut zoom100 | left right | hashA* hashB hashC hashD hashE | grid gridO* gridB mag magAx conn num ruler | wav1 wav2 wav3 : chip _ | cart txt : line2 uu sqR wire | r4g ll arcR r4 r4t | pin ua ul | hashT gearT | barRe bar : circ target rect ell hexG octO flagP film"></tool-strip>
  <tool-strip class="bar" items="wCart wCartG | puzzle | g123a g12a g12b | linesRe | flagCk flagG flagGo | flagBk flagIn | flagX : pages pageNew pageR pageL pageBack pageFwd : note | tabRing | dash1 dash2 dash3 | clouds m1 m2 m3 m4 b1 b2 wv | sym1 sym2 | corner hatch newBox : base | v3 v1 vd | ka kb | kc | rainbow : comb | bdS bdLC bdBC bdD bd nc dxf | tK zz tC tS tP tM tW tTab tTabB : a1 a2 a3 a4 a5 : c1 c2 | c3 c4"></tool-strip>
  <tool-strip class="bar" items="cab rackC rack rail duct perf ang cprof ladder omega key belt | shapes : chkR | cubeO plate teal | boxP boxR burst boxG be1 be2 be3 be4 width eq1 eq2 bendG : pane^ paneO paneG green6 axes | diam st1 st2 st3 boxF"></tool-strip>
  <main>
  <div class="left"><dock-panel class="pages" heading="页 - 测试多线原理图" arrow="up"><navigator-view>
    <tree-item state="+" icon="project" first more>测试宏项目</tree-item><tree-item state="-" icon="project" selected>测试多线原理图</tree-item><tree-item icon="pageI" bold style="--lv:1">1</tree-item>
  </navigator-view></dock-panel><div class="hs"></div><dock-panel heading="图形预览" arrow="up"><page-preview></page-preview></dock-panel></div>
  <div class="split"></div>
  <tool-strip class="side" vertical items="k1^ k2 k3 k4 k5 k6 | i1 i2 i3 i4 | eye : s1 s2 s3 s4 s5 | o1 o2 o3 o4 o5 o6 | sp | tx im lk | d1 d2 d3 d4 d5 d6 d7"></tool-strip>
  <dock-panel heading="布局空间 - 测试多线原理图" inset><navigator-view inset>
    <tree-item state="+" icon="project" first more>测试宏项目</tree-item><tree-item state="-" icon="project" selected>测试多线原理图</tree-item><tree-item state="-" icon="space" bold style="--lv:1">1</tree-item>
    <tree-item state="-" icon="mp" style="--lv:2">MP1:安装板</tree-item><tree-item state="+" icon="plateS" more style="--lv:3">MP1:安装板正面</tree-item><tree-item icon="plateS" style="--lv:3">MP1:安装板背面</tree-item>
  </navigator-view></dock-panel><div class="split"></div>
  <dock-panel heading="设备 - 测试多线原理图" inset><navigator-view inset>
    <tree-item state="+" icon="project" first more>测试宏项目</tree-item><tree-item state="-" icon="project">测试多线原理图</tree-item><tree-item state="-" icon="xy" style="--lv:1">无结构标识符</tree-item>
    ${['Q1','Q2','U1','U2','U5','U6','U7','U8'].map(n=>`<tree-item state="+" icon="xy" style="--lv:2" ${n==='Q2'?'selected':''} ${n==='U8'?'':'more'}>${n}</tree-item>`).join('')}
  </navigator-view></dock-panel><div class="split"></div>
  <drawing-area></drawing-area><div class="edge"></div>
  </main><ime-bar></ime-bar>`);
</script>
</body>
</html>
